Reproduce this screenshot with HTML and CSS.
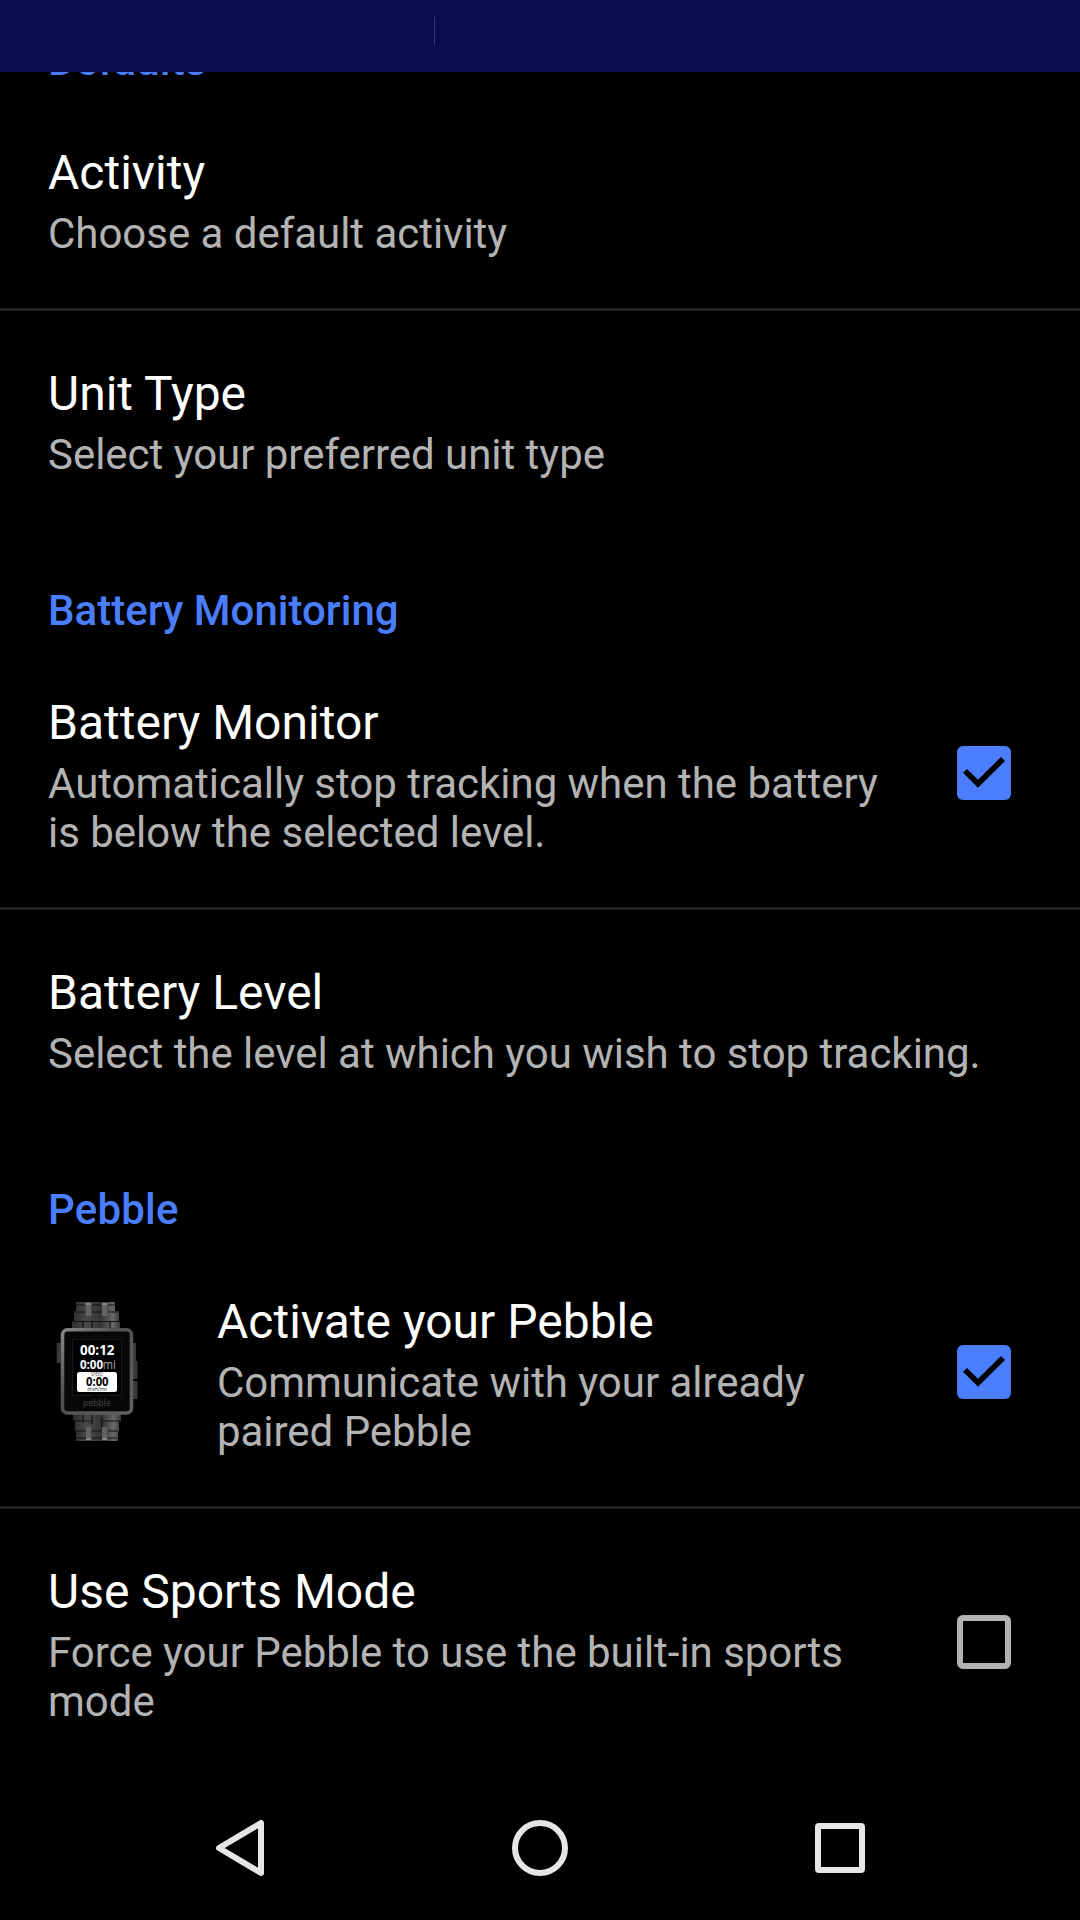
FILE: index.html
```html
<!DOCTYPE html>
<html lang="en">
<head>
<meta charset="utf-8">
<title>Settings</title>
<link rel="stylesheet" href="styles.css">
</head>
<body>
<div class="screen">
  <header class="status-bar"><span class="status-divider"></span></header>
  <main class="list">
    <div class="list-content">
      <h2 class="category short">Defaults</h2>
      <section class="row ruled">
        <div class="text"><div class="title">Activity</div><div class="summary">Choose a default activity</div></div>
      </section>
      <section class="row">
        <div class="text"><div class="title">Unit Type</div><div class="summary">Select your preferred unit type</div></div>
      </section>
      <h2 class="category">Battery Monitoring</h2>
      <section class="row ruled">
        <div class="text"><div class="title">Battery Monitor</div><div class="summary">Automatically stop tracking when the battery is below the selected level.</div></div>
        <svg class="check" viewBox="0 0 54 54"><rect width="54" height="54" rx="6" fill="#4a7eff"/><path d="M6 26.7L10 23L21 33.8L44 11L48 15L21 41.8Z"/></svg>
      </section>
      <section class="row">
        <div class="text"><div class="title">Battery Level</div><div class="summary">Select the level at which you wish to stop tracking.</div></div>
      </section>
      <h2 class="category short">Pebble</h2>
      <section class="row ruled">
        <svg class="watch" viewBox="0 0 98 144">
          <defs>
            <linearGradient id="band" x1="0" x2="1" y1="0" y2="0"><stop offset="0" stop-color="#2c2c2c"/><stop offset=".3" stop-color="#4a4a4a"/><stop offset=".6" stop-color="#343434"/><stop offset=".85" stop-color="#686868"/><stop offset="1" stop-color="#383838"/></linearGradient>
            <linearGradient id="case" x1="0" x2="1" y1="0" y2="1"><stop offset="0" stop-color="#888"/><stop offset=".4" stop-color="#505050"/><stop offset="1" stop-color="#606060"/></linearGradient>
          </defs>
          <path fill="url(#band)" d="M28 2H67V11H71V21H72V29H24V21H26V11H28Z"/>
          <path fill="url(#band)" d="M25 114H73V121H71V131H70V141H28V131H27V121H25Z"/>
          <path stroke="#111" stroke-width="1.2" fill="none" d="M28 5H37M44 5H53M60 5H67M26 12H37M44 12H53M60 12H71M25 21.500H72M44 21V28M35 21V28M62 21V28M26 121H44M54 121H71M27 131H38M44 131H54M60 131H70M35 114V121M44 114V124M54 117V131M28 138H38M44 138H54M60 138H69"/>
          <path fill="#626262" d="M38 3h5v13h-5zM54 3h5v13h-5zM38 127h5v13h-5zM54 127h5v13h-5z"/>
          <path stroke="#aaa" stroke-width="1" d="M38 4h5M54 4h5M38 139h5M54 139h5"/>
          <path fill="#383838" d="M8.700 43h4v20h-4zM85 43h3v18h-3zM85 61h4.500v18h-4.500zM85 81h4.500v18h-4.500z"/>
          <rect x="14.500" y="29.700" width="69" height="83.300" rx="5" fill="#080808" stroke="url(#case)" stroke-width="3.600"/>
          <rect x="24.500" y="39.500" width="49" height="56" fill="#010103" stroke="#18181f"/>
          <text class="clock" x="32" y="55.300" textLength="34.500" lengthAdjust="spacingAndGlyphs">00:12</text>
          <text class="distance" x="32" y="69" textLength="23" lengthAdjust="spacingAndGlyphs">0:00</text>
          <text class="unit" x="54.800" y="69" textLength="13" lengthAdjust="spacingAndGlyphs">mi</text>
          <rect x="29" y="72" width="40" height="20" rx="2.500" fill="#fff"/>
          <text class="tiny" x="43" y="76.300" textLength="12" lengthAdjust="spacingAndGlyphs">SPEED</text>
          <text class="pace" x="38" y="85.700" textLength="22.500" lengthAdjust="spacingAndGlyphs">0:00</text>
          <text class="pace-unit" x="39.300" y="91.200" textLength="19.500" lengthAdjust="spacingAndGlyphs">min/mi</text>
          <text class="brand" x="35" y="106" textLength="27.500" lengthAdjust="spacingAndGlyphs">pebble</text>
        </svg>
        <div class="text"><div class="title">Activate your Pebble</div><div class="summary">Communicate with your already paired Pebble</div></div>
        <svg class="check" viewBox="0 0 54 54"><rect width="54" height="54" rx="6" fill="#4a7eff"/><path d="M6 26.7L10 23L21 33.8L44 11L48 15L21 41.8Z"/></svg>
      </section>
      <section class="row">
        <div class="text"><div class="title">Use Sports Mode</div><div class="summary">Force your Pebble to use the built-in sports mode</div></div>
        <svg class="check" viewBox="0 0 54 54"><rect x="3" y="3" width="48" height="48" rx="3" fill="none" stroke="#b3b3b3" stroke-width="6"/></svg>
      </section>
    </div>
  </main>
  <nav class="nav-bar">
    <svg class="nav-icon" viewBox="0 0 60 60"><path d="M9 30L51 5V55Z"/></svg>
    <svg class="nav-icon" viewBox="0 0 60 60"><circle cx="30" cy="30" r="25"/></svg>
    <svg class="nav-icon" viewBox="0 0 60 60"><rect x="8" y="8" width="44" height="44" rx="1"/></svg>
  </nav>
</div>
</body>
</html>
```
FILE: styles.css
```css
* { box-sizing: border-box; }
body { margin: 0; background: #000; font-family: Roboto, sans-serif; }
.screen { width: 1080px; height: 1920px; display: flex; flex-direction: column; overflow: hidden; background: #000; }
.status-bar { height: 72px; flex: none; padding: 17px 0 0 434px; background: #0b0b52; }
.status-divider { display: block; width: 1px; height: 28px; background: #38386f; }
.list { height: 1704px; flex: none; overflow: hidden; }
/* The list is scrolled part of the way past its first heading. */
.list-content { margin-top: -93px; }
.category { height: 111px; margin: 0; padding: 57px 48px 0; font-size: 42px; line-height: 49px; font-weight: 500; color: #4a7eff; }
.category.short { letter-spacing: 0.2px; }
.row { display: flex; align-items: center; padding: 0 69px 0 48px; }
.ruled { border-bottom: 3px solid #212121; }
.text { flex: 1; padding: 55px 0 50px; }
.row:has(.check) .text { padding-right: 48px; }
.title { font-size: 48px; line-height: 56px; color: #fff; }
.summary { margin-top: 8px; font-size: 42px; line-height: 49px; letter-spacing: -0.03px; color: #b3b3b3; }
.check { width: 54px; height: 54px; flex: none; margin-bottom: 1px; }
.watch { width: 98px; height: 144px; flex: none; margin: 0 71px 1px 0; font-family: "Open Sans", sans-serif; }
.watch text { fill: #fff; }
.watch .clock { font-size: 14px; font-weight: 700; }
.watch .distance { font-size: 12.2px; font-weight: 700; }
.watch .unit { font-size: 12px; fill: #aaa; }
.watch .tiny { font-size: 4.5px; fill: #555; }
.watch .pace { font-size: 12px; font-weight: 700; fill: #000; }
.watch .pace-unit { font-size: 6px; fill: #222; }
.watch .brand { font-size: 8.5px; fill: #484848; }
.nav-bar { height: 144px; flex: none; display: flex; justify-content: center; align-items: center; gap: 240px; }
.nav-icon { width: 60px; height: 60px; fill: none; stroke: #e6e6e6; stroke-width: 6; stroke-linejoin: round; }
```
